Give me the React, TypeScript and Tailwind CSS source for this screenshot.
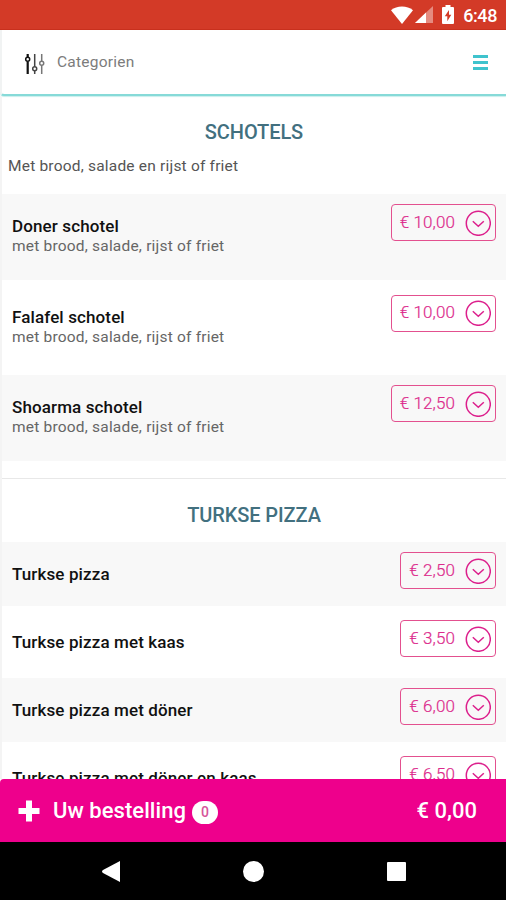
import React from 'react';

interface Product {
  name: string;
  description?: string;
  price: string;
}

interface CategoryProps {
  title: string;
  note?: string;
  products: Product[];
}

const schotels: Product[] = [
  { name: 'Doner schotel', description: 'met brood, salade, rijst of friet', price: '10,00' },
  { name: 'Falafel schotel', description: 'met brood, salade, rijst of friet', price: '10,00' },
  { name: 'Shoarma schotel', description: 'met brood, salade, rijst of friet', price: '12,50' },
];

const turksePizza: Product[] = [
  { name: 'Turkse pizza', price: '2,50' },
  { name: 'Turkse pizza met kaas', price: '3,50' },
  { name: 'Turkse pizza met döner', price: '6,00' },
  { name: 'Turkse pizza met döner en kaas', price: '6,50' },
];

const StatusBar = () => (
  <div className="flex h-[30px] shrink-0 items-center justify-end border-b border-[#c8301d] bg-[#d33a27] pr-[9px] text-white">
    <svg className="h-[18px] w-[22px]" viewBox="0 0 22 18" fill="currentColor">
      <path d="M11 18 0 4.300C3 1.700 6.800.5 11 .5s8 1.200 11 3.800z" />
    </svg>
    <svg className="ml-[2px] h-[17px] w-[18px]" viewBox="0 0 18 17">
      <path d="M18 0v17H0z" fill="#e58b80" />
      <path d="M11 6.600V17H0z" fill="currentColor" />
    </svg>
    <svg className="ml-[9px] h-[19px] w-[12px]" viewBox="0 0 12 19">
      <path d="M3.500 0h5v2H11q1 0 1 1v15q0 1-1 1H1q-1 0-1-1V3q0-1 1-1h2.500z" fill="currentColor" />
      <path d="M7 5 2.800 11.300h2.500V16.200L9.300 9.800H7z" fill="#d33a27" />
    </svg>
    <span className="mt-[2px] ml-[9px] text-[18px] leading-none font-medium tracking-[-0.4px]">6:48</span>
  </div>
);

const Header = () => (
  <header className="flex h-[66px] shrink-0 items-center justify-between rounded-bl-[4px] border-b-2 border-l-2 border-b-[#86dad8] border-l-[#f1f3f3] bg-white pr-[18px] pl-[22px] shadow-[0_1px_1px_#c9efed]">
    <div className="flex items-center">
      <svg className="mt-[3px] h-[22px] w-[22px]" viewBox="0 0 22 22" fill="none" strokeWidth="1.500">
        <g stroke="#111111">
          <path d="M3.700 1v3M3.700 8.500V21" strokeWidth="2.200" />
          <circle cx="3.700" cy="6.300" r="2" />
        </g>
        <g stroke="#444444">
          <path d="M10.700 1v12.500M10.700 18v3" />
          <circle cx="10.700" cy="15.700" r="2" />
        </g>
        <g stroke="#777777">
          <path d="M17.700 1v7M17.700 12.500V21" />
          <circle cx="17.700" cy="10.300" r="2" />
        </g>
      </svg>
      <span className="mt-[2px] ml-[11px] text-[15.5px] tracking-[0.25px] text-[#7c7c7c]">Categorien</span>
    </div>
    <div className="flex flex-col gap-[3px]">
      <span className="h-[3px] w-[15px] bg-[#3fc3cd]" />
      <span className="h-[3px] w-[15px] bg-[#3fc3cd]" />
      <span className="h-[3px] w-[15px] bg-[#3fc3cd]" />
    </div>
  </header>
);

const PriceButton = ({ price }: { price: string }) => (
  <button className="flex h-[37px] items-center rounded-[4px] border-[1.5px] border-[#e3508f] pr-[4px] pl-[8px] text-[#dc2a8c]">
    <span className="text-[17px] font-light tracking-[0.1px] whitespace-nowrap [-webkit-text-stroke:0.2px_#dc2a8c]">
      € {price}
    </span>
    <svg className="ml-[10px] h-[26px] w-[26px]" viewBox="0 0 26 26" fill="none" stroke="#dc1f8c" strokeWidth="1.500">
      <circle cx="13.300" cy="13.300" r="12" />
      <path d="m7.800 11.300 5.500 5 5.500-5" />
    </svg>
  </button>
);

const ProductRow = ({ product }: { product: Product }) => (
  <div
    className={`flex items-start justify-between pt-[10px] pr-[10px] pl-[10px] odd:bg-[#f8f8f8] ${
      product.description ? 'h-[85.5px]' : 'h-[64px]'
    }`}
  >
    <div className="pt-[12px]">
      <h3 className="text-[17px] leading-[20px] font-medium tracking-[0.12px] text-[#111111]">{product.name}</h3>
      {product.description && (
        <p className="text-[15.5px] leading-[21px] tracking-[0.2px] text-[#666666]">{product.description}</p>
      )}
    </div>
    <PriceButton price={product.price} />
  </div>
);

const Category = ({ title, note, products }: CategoryProps) => (
  <section>
    <h2 className="pt-[24px] text-center text-[20px] leading-[24px] font-medium tracking-[-0.1px] text-[#42707f]">
      {title}
    </h2>
    {note && (
      <p className="mt-[12px] pl-[6px] text-[15.5px] leading-[20px] tracking-[0.2px] text-[#555555]">{note}</p>
    )}
    <div className={`flex flex-col ${note ? 'mt-[18px] gap-[5px]' : 'mt-[15px] gap-[4px]'}`}>
      {products.map((product) => (
        <ProductRow key={product.name} product={product} />
      ))}
    </div>
  </section>
);

const OrderBar = () => (
  <div className="flex h-[63px] shrink-0 items-center justify-between rounded-tl-[4px] bg-[#ee008c] pr-[29px] pl-[18px] text-white">
    <div className="flex items-center">
      <svg className="h-[22px] w-[22px]" viewBox="0 0 22 22" fill="currentColor">
        <path d="M8 .5h6V8h7.500v6H14v7.500H8V14H.5V8H8z" />
      </svg>
      <span className="ml-[13px] text-[22px] font-medium tracking-[0.05px]">Uw bestelling</span>
      <span className="mt-[4px] ml-[6px] flex h-[23px] w-[26px] items-center justify-center rounded-full bg-white text-[14px] font-medium text-[#d6559a]">
        0
      </span>
    </div>
    <span className="text-[22px] font-medium">€ 0,00</span>
  </div>
);

const NavigationBar = () => (
  <div className="flex h-[58px] shrink-0 items-center justify-between bg-black pr-[100px] pl-[102px] text-white">
    <svg className="h-[21px] w-[18px]" viewBox="0 0 18 21" fill="currentColor">
      <path d="M18 0v21L1 12q-2-1.500 0-3z" />
    </svg>
    <span className="h-[21px] w-[21px] rounded-full bg-white" />
    <span className="h-[19px] w-[19px] rounded-[1px] bg-white" />
  </div>
);

const App = () => {
  return (
    <div className="flex h-screen flex-col overflow-hidden bg-white font-[Roboto,sans-serif]">
      <StatusBar />
      <Header />
      <main className="min-h-0 flex-1 overflow-hidden border-l-2 border-[#f4f4f4]">
        <Category title="SCHOTELS" note="Met brood, salade en rijst of friet" products={schotels} />
        <div className="mt-[17.5px] border-t border-[#e8e8e8]" />
        <Category title="TURKSE PIZZA" products={turksePizza} />
      </main>
      <OrderBar />
      <NavigationBar />
    </div>
  );
};

export default App;
